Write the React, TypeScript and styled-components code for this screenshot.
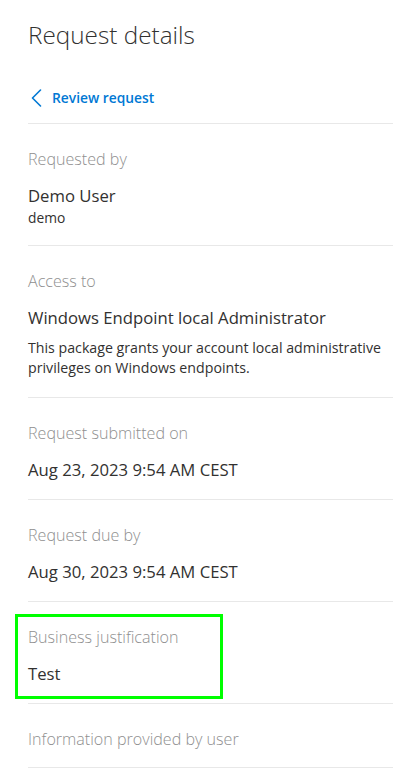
import React from 'react'
import styled, { createGlobalStyle } from 'styled-components'

const GlobalStyle = createGlobalStyle`
    html, body {
        margin: 0;
        padding: 0;
        background: #ffffff;
    }
    body {
        font-family: 'Open Sans', 'Noto Sans', sans-serif;
        color: #323130;
    }
`

const Panel = styled.div`
    width: 413px;
    box-sizing: border-box;
    padding: 0 20px 0 28px;
`

const Header = styled.div`
    border-bottom: 1px solid #e8e8e8;
    padding: 19px 0 13px;
`

const Title = styled.h1`
    margin: 0;
    font-size: 24.3px;
    line-height: 32px;
    font-weight: 300;
    color: #323130;
`

const BackLink = styled.a`
    display: flex;
    align-items: center;
    gap: 10px;
    margin-top: 35px;
    padding-left: 3px;
    color: #0078d4;
    font-size: 13.8px;
    line-height: 24px;
    font-weight: 600;
    text-decoration: none;
    cursor: pointer;
`

const Section = styled.div<{ $bottom?: number }>`
    position: relative;
    border-bottom: 1px solid #e8e8e8;
    padding: 24px 0 ${(p) => p.$bottom ?? 17}px;
`

const Label = styled.div`
    font-size: 16.1px;
    line-height: 22px;
    font-weight: 300;
    color: #8f8f8f;
`

const Value = styled.div`
    margin-top: 14px;
    font-size: 16.7px;
    line-height: 24px;
    font-weight: 400;
    color: #323130;
`

const SubValue = styled.div`
    font-size: 13.8px;
    line-height: 20px;
    color: #323130;
`

const Description = styled.div`
    margin-top: 8px;
    font-size: 14.2px;
    line-height: 19.5px;
    color: #323130;
`

const Highlight = styled.div`
    position: absolute;
    left: -13px;
    top: 12px;
    width: 208px;
    height: 85px;
    box-sizing: border-box;
    border: 3px solid #00ff00;
    pointer-events: none;
`

const Chevron = () => (
    <svg width="11" height="18" viewBox="0 0 11 18" fill="none">
        <path d="M9.5 1 L1.5 9 L9.5 17" stroke="#0078d4" strokeWidth="1.6" strokeLinecap="round" strokeLinejoin="round" />
    </svg>
)

const App = () => {
    return (
        <Panel>
            <GlobalStyle />
            <Header>
                <Title>Request details</Title>
                <BackLink>
                    <Chevron />
                    Review request
                </BackLink>
            </Header>
            <Section>
                <Label>Requested by</Label>
                <Value>Demo User</Value>
                <SubValue>demo</SubValue>
            </Section>
            <Section $bottom={20}>
                <Label>Access to</Label>
                <Value>Windows Endpoint local Administrator</Value>
                <Description>
                    This package grants your account local administrative privileges on Windows endpoints.
                </Description>
            </Section>
            <Section>
                <Label>Request submitted on</Label>
                <Value>Aug 23, 2023 9:54 AM CEST</Value>
            </Section>
            <Section>
                <Label>Request due by</Label>
                <Value>Aug 30, 2023 9:54 AM CEST</Value>
            </Section>
            <Section>
                <Highlight />
                <Label>Business justification</Label>
                <Value>Test</Value>
            </Section>
            <Section $bottom={17}>
                <Label>Information provided by user</Label>
            </Section>
        </Panel>
    )
}

export default App
